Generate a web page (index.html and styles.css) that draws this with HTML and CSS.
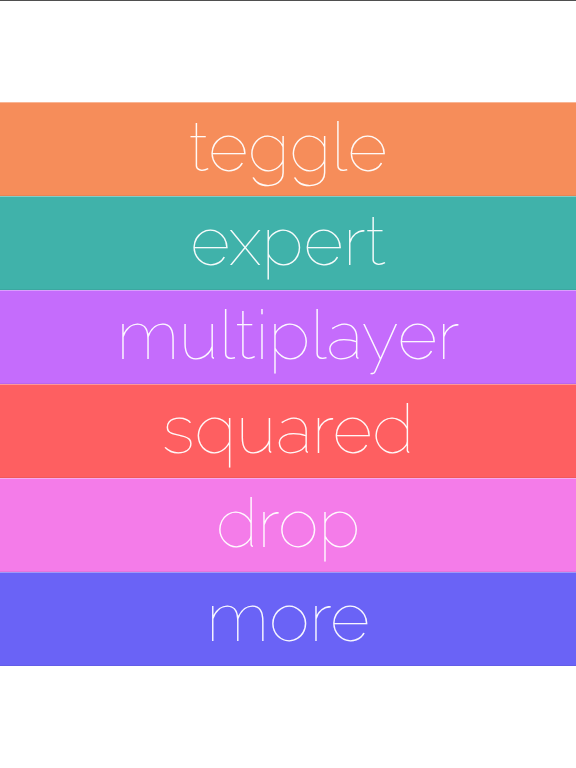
FILE: index.html
```html
<!DOCTYPE html>
<html>
<head>
<meta charset="utf-8">
<link rel="stylesheet" href="styles.css">
</head>
<body>
<div class="screen">
  <nav class="menu">
    <div class="band orange">teggle</div>
    <div class="band teal">expert</div>
    <div class="band purple">multiplayer</div>
    <div class="band red">squared</div>
    <div class="band pink">drop</div>
    <div class="band blue">more</div>
  </nav>
</div>
</body>
</html>
```
FILE: styles.css
```css
html, body {
  margin: 0;
  padding: 0;
  background: #ffffff;
}
.screen {
  width: 576px;
  height: 768px;
  border-top: 1px solid #4f4f4f;
  box-sizing: border-box;
  padding-top: 101px;
}
.menu {
  display: flex;
  flex-direction: column;
}
.band {
  height: 94px;
  box-sizing: border-box;
  border-top: 1px solid rgba(255,255,255,0.35);
  border-bottom: 1px solid rgba(0,0,0,0.06);
  display: flex;
  align-items: center;
  justify-content: center;
  color: rgba(255,255,255,0.95);
  font-family: "Raleway", "Lato", "Inter", "Roboto", sans-serif;
  font-weight: 100;
  font-size: 69px;
  line-height: 1;
  padding-bottom: 6px;
}
.orange { background: #f68d5a; }
.teal { background: #40b2aa; }
.purple { background: #c56cfc; }
.red { background: #fe5f61; }
.pink { background: #f47ce9; }
.blue { background: #6a63f6; }
```
